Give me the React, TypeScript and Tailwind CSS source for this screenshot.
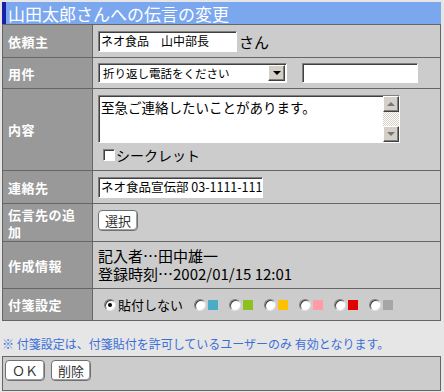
import React from "react";

const inset =
  "border border-t-[#808080] border-l-[#808080] border-b-white border-r-white shadow-[inset_1px_1px_0_#404040]";
const raised =
  "bg-[#d4d0c8] border border-t-white border-l-white border-b-[#404040] border-r-[#404040] shadow-[inset_-1px_-1px_0_#808080]";

function Row({
  label,
  h,
  children,
  cls = "items-center",
}: {
  label: React.ReactNode;
  h: string;
  children: React.ReactNode;
  cls?: string;
}) {
  return (
    <div className={`flex border-b border-[#666] ${h}`}>
      <div className="w-[90px] shrink-0 bg-[#999999] border-r border-[#666] flex items-center pl-[5px] pr-[2px] text-white font-bold text-[13px] leading-[17px] tracking-[0.5px]">
        {label}
      </div>
      <div className={`flex-1 bg-[#cccccc] flex ${cls}`}>{children}</div>
    </div>
  );
}

function Radio({ checked = false }: { checked?: boolean }) {
  return (
    <div className="w-[12px] h-[12px] rounded-full bg-white border border-t-[#808080] border-l-[#808080] border-b-[#e0e0e0] border-r-[#e0e0e0] shadow-[inset_1px_1px_0_#404040] flex items-center justify-center shrink-0">
      {checked && <div className="w-[4px] h-[4px] rounded-full bg-black" />}
    </div>
  );
}

function Btn({ children }: { children: React.ReactNode }) {
  return (
    <div className="w-[40px] h-[21px] rounded-[4px] bg-white border border-[#707070] shadow-[inset_-1px_-1px_0_#a0a0a0] flex items-center justify-center text-[13px] text-[#333] leading-none">
      {children}
    </div>
  );
}

export default function App() {
  const colors = ["#4bacc6", "#8dc021", "#ffc000", "#ff9ca8", "#e00000", "#a6a6a6"];
  return (
    <div className="w-[444px] h-[392px] bg-[#e6e6e6] pt-[2px] pl-[2px] font-['Noto_Sans_CJK_JP',sans-serif] text-black overflow-hidden">
      {/* header */}
      <div className="w-[439px] h-[22px] bg-[#7ba7ef] flex items-center">
        <div className="w-[4px] h-full bg-[#1e1ea8]" />
        <div className="pl-[2px] text-white text-[17px] leading-none">山田太郎さんへの伝言の変更</div>
      </div>
      {/* table */}
      <div className="w-[439px] border-l border-t border-r border-[#666]">
        <Row label="依頼主" h="h-[33px]">
          <div className={`ml-[5px] w-[139px] h-[21px] bg-white ${inset} flex items-center pl-[2px] text-[12px] overflow-hidden whitespace-nowrap`}>
            ネオ食品　山中部長
          </div>
          <div className="ml-[2px] text-[15px] leading-none">さん</div>
        </Row>
        <Row label="用件" h="h-[31px]">
          <div className={`ml-[5px] w-[189px] h-[20px] bg-white ${inset} flex items-center`}>
            <div className="w-[168px] pl-[4px] text-[11.5px] leading-[14px] whitespace-nowrap">
              折り返し電話をください
            </div>
            <div className={`w-[17px] h-[16px] ml-auto mr-[1px] ${raised} flex items-center justify-center`}>
              <div className="w-0 h-0 border-l-[4px] border-r-[4px] border-t-[4px] border-l-transparent border-r-transparent border-t-black" />
            </div>
          </div>
          <div className={`ml-[15px] w-[116px] h-[20px] bg-white ${inset}`} />
        </Row>
        <Row label="内容" h="h-[82px]" cls="flex-col items-start pt-[6px]">
          <div className={`ml-[5px] w-[302px] h-[48px] bg-white ${inset} flex`}>
            <div className="flex-1 pl-[2px] pt-[3px] text-[13.5px] leading-[16px] whitespace-nowrap">
              至急ご連絡したいことがあります。
            </div>
            <div className="w-[16px] h-full flex flex-col">
              <div className={`w-[16px] h-[16px] ${raised} flex items-center justify-center`}>
                <div className="w-0 h-0 border-l-[4px] border-r-[4px] border-b-[4px] border-l-transparent border-r-transparent border-b-[#777]" />
              </div>
              <div className="flex-1 bg-[image:repeating-conic-gradient(#d4d0c8_0_25%,#ffffff_0_50%)] bg-[length:2px_2px]" />
              <div className={`w-[16px] h-[16px] ${raised} flex items-center justify-center`}>
                <div className="w-0 h-0 border-l-[4px] border-r-[4px] border-t-[4px] border-l-transparent border-r-transparent border-t-[#777]" />
              </div>
            </div>
          </div>
          <div className="ml-[10px] mt-[5px] flex items-center">
            <div className={`w-[12px] h-[12px] bg-white ${inset}`} />
            <div className="ml-[1px] text-[14px] leading-none">シークレット</div>
          </div>
        </Row>
        <Row label="連絡先" h="h-[33px]">
          <div className={`ml-[5px] w-[165px] h-[21px] bg-white ${inset} flex items-center pl-[2px] text-[12.5px] overflow-hidden whitespace-nowrap`}>
            ネオ食品宣伝部 03-1111-1111
          </div>
        </Row>
        <Row label={<span>伝言先の追<br />加</span>} h="h-[38px]" cls="items-start pt-[6px]">
          <div className="ml-[5px]">
            <Btn>選択</Btn>
          </div>
        </Row>
        <Row label="作成情報" h="h-[47px]">
          <div className="ml-[5px] text-[15px] leading-[18px] whitespace-nowrap">
            <div>記入者…田中雄一</div>
            <div>登録時刻…2002/01/15 12:01</div>
          </div>
        </Row>
        <Row label="付箋設定" h="h-[32px]">
          <div className="ml-[11px] flex items-center">
            <Radio checked />
            <div className="ml-[2px] text-[13px] leading-none">貼付しない</div>
            {colors.map((c) => (
              <div key={c} className="ml-[11px] flex items-center">
                <Radio />
                <div className="ml-[2px] w-[10px] h-[10px]" style={{ backgroundColor: c }} />
              </div>
            ))}
          </div>
        </Row>
      </div>
      {/* note */}
      <div className="h-[35px] pt-[15px] text-[12px] leading-[16px] text-[#3a6fd8] whitespace-nowrap">
        ※ 付箋設定は、付箋貼付を許可しているユーザーのみ 有効となります。
      </div>
      {/* button bar */}
      <div className="w-[439px] h-[35px] bg-[#cccccc] border border-[#666] flex items-start pt-[3px] pl-[2px] gap-[6px]">
        <Btn>ＯＫ</Btn>
        <Btn>削除</Btn>
      </div>
    </div>
  );
}
